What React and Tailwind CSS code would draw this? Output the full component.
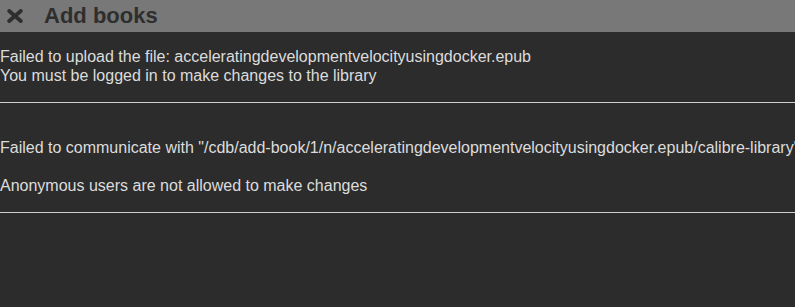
export default function App() {
  const failures = [
    {
      id: 1,
      lines: [
        'Failed to upload the file: acceleratingdevelopmentvelocityusingdocker.epub',
        'You must be logged in to make changes to the library',
      ],
    },
    {
      id: 2,
      lines: [
        'Failed to communicate with "/cdb/add-book/1/n/acceleratingdevelopmentvelocityusingdocker.epub/calibre-library"',
        '',
        'Anonymous users are not allowed to make changes',
      ],
    },
  ]

  return (
    <div className="h-[307px] w-[795px] overflow-hidden bg-[#2c2c2c] font-['Liberation_Sans',Arial,sans-serif] text-[#dcdcdc]">
      {/* ── Header ── */}
      <div className="flex h-8 items-center bg-[#787878] text-[#2e2e2e]">
        <button aria-label="Close" className="ml-[7px] flex h-4 w-4 items-center justify-center">
          <svg width="16" height="14" viewBox="0 0 16 14">
            <path d="M2.2 2 L13.8 12 M13.8 2 L2.2 12" stroke="#2e2e2e" strokeWidth="3.8" strokeLinecap="round" />
          </svg>
        </button>
        <h1 className="ml-[21px] text-[22px] font-bold leading-none">Add books</h1>
      </div>

      {/* ── Upload errors ── */}
      <div className="pt-[15px]">
        {failures.map((f, i) => (
          <div key={f.id} className={i === 0 ? '' : 'pt-[35px]'}>
            <div className="whitespace-pre text-[16px] leading-[19px]">
              {f.lines.map((l, j) => (
                <div key={j} className={l === '' ? 'h-[19px]' : ''}>{l}</div>
              ))}
            </div>
            <hr className="mt-[17px] border-t border-[#cfcfcf]" />
          </div>
        ))}
      </div>
    </div>
  )
}
